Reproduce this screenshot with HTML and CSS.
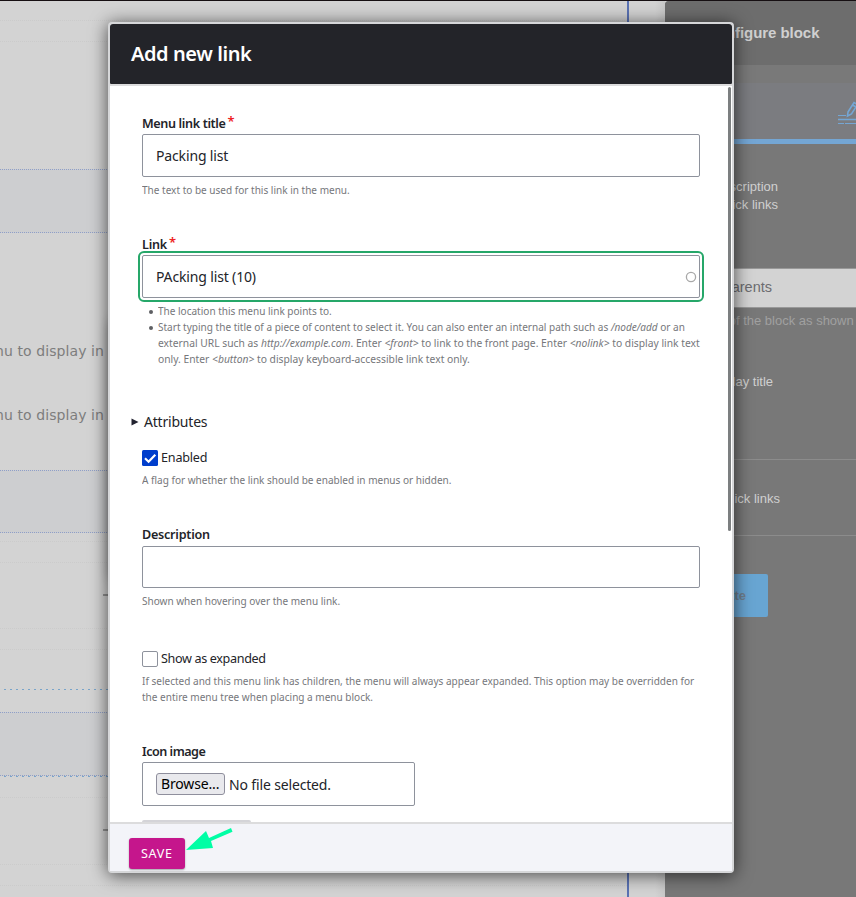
FILE: index.html
```
<!DOCTYPE html>
<html lang="en">
<head>
<meta charset="utf-8">
<title>Add new link</title>
<link rel="stylesheet" href="styles.css">
</head>
<body>
<div class="page">
  <main class="canvas">
    <div class="rows">
      <div class="gap gap-top"><i></i><i></i></div>
      <div class="band"></div>
      <div class="notes">
        <p>nu to display in</p>
        <p>nu to display in</p>
      </div>
      <div class="band band-short"></div>
      <div class="gap gap-mid"><i></i><i></i><b></b><i></i><i></i><u></u></div>
      <div class="band"></div>
      <div class="gap gap-end"><u></u><i></i><b></b><i></i><i></i></div>
    </div>
  </main>
  <aside class="panel">
    <header class="panel-head">Configure block</header>
    <div class="panel-tab">
      <svg width="24" height="24" viewBox="0 0 24 24" fill="none" stroke="#74a6d4"><path d="M0 14.500h8M0 22.500h6M7 22.500h17"/><path stroke-width="1.500" d="M0 18.500h24"/><path stroke-width="1.600" d="M10 11 16 1.500l3.500 2-6 9.500-4 2zM14.500 4l3.500 2"/></svg>
    </div>
    <div class="summary">Block description<br>Block: Quick links</div>
    <div class="panel-input">For parents</div>
    <div class="panel-help">Title of the block as shown t</div>
    <div class="panel-check">Display title</div>
    <div class="panel-links">Quick links</div>
    <div class="panel-button">Update</div>
  </aside>
</div>
<div class="inner-shadow"></div>
<section class="dialog">
  <h1 class="dialog-head"><span class="t-title">Add new link</span></h1>
  <div class="dialog-body">
    <div class="scrollbar"></div>
    <div class="label"><span class="t-l1">Menu link title</span><sup>*</sup></div>
    <div class="input"><span class="t-packing">Packing list</span></div>
    <p class="help"><span>The text to be used for this link in the menu.</span></p>

    <div class="label label-link"><span class="t-l2">Link</span><sup>*</sup></div>
    <div class="input input-focus"><span class="t-packing2">PAcking list (10)</span><svg class="throbber" width="12" height="12" viewBox="0 0 12 12" fill="none" stroke="#a8a8a8"><circle cx="6" cy="6" r="4.600" stroke-width="1.300"/></svg></div>
    <ul class="help help-list">
      <li><span>The location this menu link points to.</span></li>
      <li><span>Start typing the title of a piece of content to select it. You can also enter an internal path such as <em>/node/add</em> or an</span><br><span class="wide">external URL such as <em>http://example.com</em>. Enter <em>&lt;front&gt;</em> to link to the front page. Enter <em>&lt;nolink&gt;</em> to display link text</span><br><span class="wide">only. Enter <em>&lt;button&gt;</em> to display keyboard-accessible link text only.</span></li>
    </ul>

    <div class="details"><svg width="8" height="8" viewBox="0 0 8 8"><path d="M.5.5v7l7-3.500z" fill="#222330"/></svg><span class="t-attr">Attributes</span></div>

    <div class="check"><svg width="16" height="16" viewBox="0 0 16 16"><rect width="16" height="16" rx="1.500" fill="#003ecc"/><path d="M3 8.200l3.600 3.500 6.700-7" fill="none" stroke="#fff" stroke-width="2.200"/></svg><span class="t-en">Enabled</span></div>
    <p class="help help-check"><span>A flag for whether the link should be enabled in menus or hidden.</span></p>

    <div class="label label-desc"><span class="t-l3">Description</span></div>
    <div class="input input-empty"></div>
    <p class="help"><span>Shown when hovering over the menu link.</span></p>

    <div class="check check-exp"><span class="box"></span><span class="t-exp">Show as expanded</span></div>
    <p class="help help-check"><span>If selected and this menu link has children, the menu will always appear expanded. This option may be overridden for</span><br><span>the entire menu tree when placing a menu block.</span></p>

    <div class="label label-icon"><span class="t-l4">Icon image</span></div>
    <div class="input input-file"><span class="browse"><span class="t-br">Browse...</span></span><span class="t-nofile">No file selected.</span></div>
    <div class="cutoff"></div>
  </div>
  <footer class="dialog-foot">
    <span class="save">SAVE</span>
    <svg class="arrow" width="48" height="26" viewBox="0 0 48 26"><path d="M0 23 20 4l3 7L45 1l1.500 3.800L25 14l2 7z" fill="#00fea5"/></svg>
  </footer>
</section>
</body>
</html>
```
FILE: styles.css
```
* { box-sizing: border-box; }
body { margin: 0; height: 897px; overflow: hidden; font-family: "Noto Sans", sans-serif; color: #232429; }
p, h1, ul { margin: 0; padding: 0; }
span { white-space: nowrap; }

.page { display: flex; width: 856px; height: 897px; border-top: 1px solid #160f12; background: #d3d3d3; }
.canvas { width: 665px; display: flex; background: linear-gradient(90deg, #d3d3d3 655px, #c8c8c8 665px); }
.rows { width: 629px; border-right: 2px solid #5a72b4; }
.band { height: 64px; background: #cdced0; border: 1px dotted #8f9fc8; border-width: 1px 0; }
.band-short { height: 63px; }
.gap, .notes { display: flex; flex-direction: column; }
.gap i { height: 1px; border-top: 1px dotted #cbcbcb; margin-top: 20px; }
.gap b { width: 6px; height: 2px; margin-left: 103px; background: #929292; }
.gap u { height: 1px; margin-left: 4px; background: repeating-linear-gradient(90deg, #78a4ca 0 2px, transparent 2px 6px); }
.gap-top { height: 168px; }
.gap-top i:first-child { margin-top: 19px; }
.notes { height: 237px; padding-top: 106px; font: 14px/24px "DejaVu Sans", sans-serif; color: #7d7d7d; gap: 40px; }
.notes p { margin-left: -5px; letter-spacing: .09px; }
.gap-mid { height: 179px; }
.gap-mid i:first-child { margin-top: 8px; }
.gap-mid b { margin-top: 31px; }
.gap-mid b + i { margin-top: 32px; }
.gap-mid u { margin-top: 39px; }
.gap-end b { margin-top: 31px; }
.gap-end b + i { margin-top: 33px; }

.panel { width: 191px; background: #787878; border-radius: 4px 0 0; font: 13px/18px "Liberation Sans", sans-serif; color: #d0d0d0; overflow: hidden; white-space: nowrap; }
.panel-head { height: 64px; background: #6d6d6d; font-weight: 700; font-size: 15px; line-height: 63px; padding-left: 41px; letter-spacing: -.05px; }
.panel-tab { height: 79px; border-top: 18px solid #797979; border-bottom: 5px solid #74a6d4; background: #7b7c80; padding: 18px 0 0 173px; }
.summary { margin: 34px 78px 0 0; text-align: right; }
.panel-input { height: 40px; margin-top: 54px; background: #d3d3d3; border: 1px solid #999; border-width: 1px 0; line-height: 37px; font-size: 14.500px; color: #6c6c70; padding-right: 84px; display: flex; justify-content: flex-end; }
.panel-help { margin: 4px 0 0 36px; color: #a0a0a0; }
.panel-check { margin: 43px 83px 0 0; text-align: right; }
.panel-links { margin-top: 68px; height: 77px; border: 1px solid #8c8c8c; border-width: 1px 0; padding: 30px 76px 0 0; text-align: right; }
.panel-button { margin-top: 38px; width: 103px; height: 43px; border-radius: 0 2px 2px 0; background: #68a5d2; color: #6f7f8e; font-weight: 700; line-height: 43px; text-align: right; padding-right: 22px; }

.inner-shadow { position: absolute; left: 112px; top: 322px; width: 30px; height: 256px; box-shadow: 0 0 14px #0007; }
.dialog { position: absolute; left: 108px; top: 22px; width: 626px; height: 851px; border: 2px solid #d6d7d9; border-radius: 4px; background: #fff; box-shadow: 0 2px 18px #000a; display: flex; flex-direction: column; }
.dialog-head { height: 60px; background: #232429; border-radius: 3px 3px 1px 1px; color: #fff; font-size: 20px; line-height: 60px; font-weight: 600; padding-left: 21px; letter-spacing: -.42px; }
.dialog-body { height: 738px; border-top: 2px solid #dcdcdd; padding: 27px 32px 0; overflow: hidden; position: relative; }
.scrollbar { position: absolute; right: 1px; top: 1px; width: 3px; height: 444px; border-radius: 2px; background: #7c7f80; }
.label { height: 21px; line-height: 21px; font-size: 12.600px; font-weight: 600; display: flex; }
.label sup { color: #ee2222; font-size: 13px; line-height: 17px; margin-left: 2px; }
.t-l1 { letter-spacing: -.36px; }
.t-l2, .t-l3 { letter-spacing: -.25px; }
.t-l4 { letter-spacing: -.5px; }
.input { height: 43px; border: 1px solid #8e929c; border-radius: 2px; display: flex; align-items: center; padding-left: 13px; font-size: 14px; }
.t-packing, .t-packing2 { letter-spacing: -.15px; }
.input-focus { outline: 2px solid #26a769; outline-offset: 2px; justify-content: space-between; padding-right: 2px; }
.help { font-size: 10.700px; line-height: 16px; color: #76777b; margin-top: 5px; }
.help span { display: inline-block; vertical-align: top; transform: scaleX(.938); transform-origin: 0 50%; }
.help .wide { transform: scaleX(.963); }
.help-list { padding-left: 16px; list-style: none; }
.help-list li { display: flow-root; }
.help-list li::before { content: ""; float: left; width: 4px; height: 4px; margin: 7px 0 0 -9px; border-radius: 50%; background: #5e5f63; }
.label-link { margin-top: 36px; }
.details { display: flex; align-items: center; gap: 5px; margin: 45px 0 0 -11px; height: 20px; font-size: 14px; }
.t-attr { letter-spacing: -.2px; margin-top: -1px; }
.check { display: flex; align-items: center; gap: 3px; margin-top: 18px; height: 16px; font-size: 12.600px; }
.t-en, .t-exp { margin-top: -2px; letter-spacing: -.2px; }
.t-exp { letter-spacing: -.35px; }
.help-check { margin-top: 6px; }
.label-desc { margin: 36px 0 1px; }
.input-empty { height: 42px; }
.check-exp { margin-top: 42px; }
.box { width: 16px; height: 16px; border: 1px solid #8e929c; border-radius: 2px; }
.label-icon { margin-top: 36px; }
.input-file { width: 273px; height: 44px; padding-left: 13px; gap: 4px; }
.browse { width: 69px; height: 22px; border: 1px solid #8f8f9d; border-radius: 3px; background: #e9e9ed; color: #000; line-height: 20px; padding-left: 4px; }
.t-br { letter-spacing: -.15px; }
.t-nofile { letter-spacing: -.15px; }
.cutoff { width: 109px; height: 20px; margin-top: 14px; border-radius: 2px; background: #d4d4d8; }
.dialog-foot { flex: 1; background: #f3f4f9; border-top: 2px solid #dcdcdd; display: flex; padding: 14px 0 0 19px; }
.save { width: 56px; height: 31px; border-radius: 3px; background: #c5168c; color: #fff; font-size: 12.600px; line-height: 31px; padding-left: 12px; letter-spacing: .7px; box-shadow: 0 1px 2px #0005; }
.arrow { margin: -11px 0 0 1px; }
```
